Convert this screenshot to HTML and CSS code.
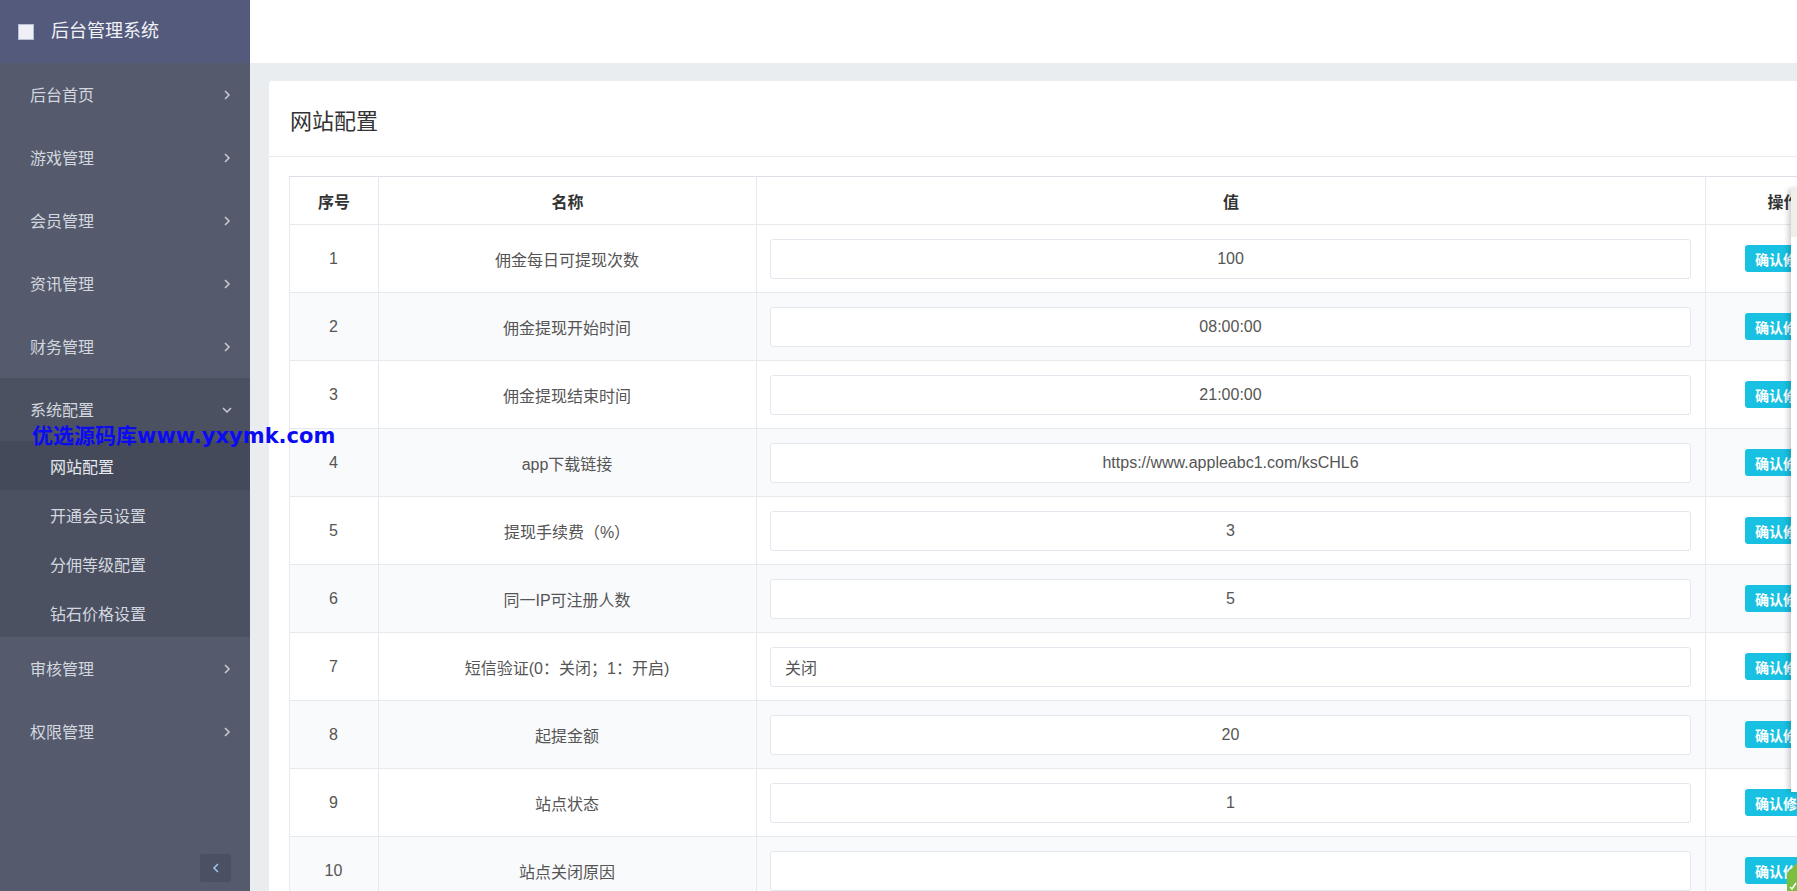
FILE: index.html
```html
<!DOCTYPE html>
<html lang="zh-CN">
<head>
    <meta charset="UTF-8">
    <title>网站配置 - 后台管理系统</title>
    <link rel="stylesheet" href="styles.css">
</head>
<body>
<div class="layout">
    <aside class="sidebar">
        <div class="brand"><span class="brand-logo"></span><span class="brand-name">后台管理系统</span></div>
        <ul class="menu">
            <li class="menu-item"><span>后台首页</span><svg class="arrow" viewBox="0 0 8 12"><polyline points="2,2 6,6 2,10"/></svg></li>
            <li class="menu-item"><span>游戏管理</span><svg class="arrow" viewBox="0 0 8 12"><polyline points="2,2 6,6 2,10"/></svg></li>
            <li class="menu-item"><span>会员管理</span><svg class="arrow" viewBox="0 0 8 12"><polyline points="2,2 6,6 2,10"/></svg></li>
            <li class="menu-item"><span>资讯管理</span><svg class="arrow" viewBox="0 0 8 12"><polyline points="2,2 6,6 2,10"/></svg></li>
            <li class="menu-item"><span>财务管理</span><svg class="arrow" viewBox="0 0 8 12"><polyline points="2,2 6,6 2,10"/></svg></li>
            <li class="menu-group">
                <div class="menu-item"><span>系统配置</span><svg class="arrow-down" viewBox="0 0 12 8"><polyline points="2,2 6,6 10,2"/></svg></div>
                <ul class="submenu">
                    <li class="active">网站配置</li>
                    <li>开通会员设置</li>
                    <li>分佣等级配置</li>
                    <li>钻石价格设置</li>
                </ul>
            </li>
            <li class="menu-item"><span>审核管理</span><svg class="arrow" viewBox="0 0 8 12"><polyline points="2,2 6,6 2,10"/></svg></li>
            <li class="menu-item"><span>权限管理</span><svg class="arrow" viewBox="0 0 8 12"><polyline points="2,2 6,6 2,10"/></svg></li>
        </ul>
        <button class="collapse"><svg viewBox="0 0 8 12"><polyline points="6,2 2,6 6,10"/></svg></button>
    </aside>

    <main class="main">
        <header class="topbar"></header>
        <div class="content">
            <div class="card">
                <div class="card-title">网站配置</div>
                <div class="card-body">
                    <table class="config-table">
                        <colgroup>
                            <col class="c-no"><col class="c-name"><col class="c-val"><col class="c-op">
                        </colgroup>
                        <thead>
                            <tr><th>序号</th><th>名称</th><th>值</th><th>操作</th></tr>
                        </thead>
                        <tbody>
                            <tr><td>1</td><td>佣金每日可提现次数</td><td><input type="text" value="100"></td><td><button class="btn-save">确认修改</button></td></tr>
                            <tr><td>2</td><td>佣金提现开始时间</td><td><input type="text" value="08:00:00"></td><td><button class="btn-save">确认修改</button></td></tr>
                            <tr><td>3</td><td>佣金提现结束时间</td><td><input type="text" value="21:00:00"></td><td><button class="btn-save">确认修改</button></td></tr>
                            <tr><td>4</td><td>app下载链接</td><td><input type="text" value="https://www.appleabc1.com/ksCHL6"></td><td><button class="btn-save">确认修改</button></td></tr>
                            <tr><td>5</td><td>提现手续费（%）</td><td><input type="text" value="3"></td><td><button class="btn-save">确认修改</button></td></tr>
                            <tr><td>6</td><td>同一IP可注册人数</td><td><input type="text" value="5"></td><td><button class="btn-save">确认修改</button></td></tr>
                            <tr><td>7</td><td>短信验证(0：关闭；1：开启)</td><td><input type="text" class="left" value="关闭"></td><td><button class="btn-save">确认修改</button></td></tr>
                            <tr><td>8</td><td>起提金额</td><td><input type="text" value="20"></td><td><button class="btn-save">确认修改</button></td></tr>
                            <tr><td>9</td><td>站点状态</td><td><input type="text" value="1"></td><td><button class="btn-save">确认修改</button></td></tr>
                            <tr><td>10</td><td>站点关闭原因</td><td><input type="text" value=""></td><td><button class="btn-save">确认修改</button></td></tr>
                        </tbody>
                    </table>
                </div>
            </div>
        </div>
    </main>
</div>

<div class="watermark">优选源码库www.yxymk.com</div>
<div class="side-float"><div class="side-float-top"></div></div>
<div class="corner-badge">
    <svg viewBox="0 0 10 28"><polygon points="10,0 10,28 0,28 0,10" fill="#7bbf3f"/><polyline points="3,24 5,26 9,20" fill="none" stroke="#fff" stroke-width="1.5"/></svg>
</div>
</body>
</html>
```

FILE: styles.css
```css
* { box-sizing: border-box; }
html, body { margin: 0; padding: 0; height: 100%; overflow: hidden; }
body { font-family: "Liberation Sans", "Noto Sans CJK SC", sans-serif; font-size: 16px; color: #555; background: #e9edf0; }
ul { list-style: none; margin: 0; padding: 0; }

.layout { display: flex; height: 891px; }

/* sidebar */
.sidebar { width: 250px; flex-shrink: 0; background: #555b6d; display: flex; flex-direction: column; }
.brand { height: 63px; background: #535a7c; display: flex; align-items: center; padding-left: 18px; }
.brand-logo { width: 16px; height: 16px; background: #eef0f5; border: 1px solid #b9bfd2; }
.brand-name { margin-left: 17px; font-size: 18px; color: #f2f3f7; line-height: 1; margin-top: -2px; }

.menu-item { height: 63px; display: flex; align-items: center; justify-content: space-between; padding: 0 19px 0 30px; color: #d3d7df; font-size: 16px; }
.menu-item span { margin-top: -2px; }
.arrow { width: 8px; height: 12px; }
.arrow-down { width: 12px; height: 8px; margin-right: -2px; }
.arrow polyline, .arrow-down polyline { fill: none; stroke: #c9cdd6; stroke-width: 1.5; }
.menu-group { background: #4c5162; }
.submenu li { height: 49px; display: flex; align-items: center; padding-left: 50px; color: #d3d7df; font-size: 16px; }
.submenu li.active { background: #454a5a; color: #e6e9ee; }

.collapse { margin-top: auto; align-self: flex-end; margin-right: 19px; margin-bottom: 9px; width: 31px; height: 28px; border: 0; border-radius: 2px; background: #4b5062; display: flex; align-items: center; justify-content: center; padding: 0; }
.collapse svg { width: 8px; height: 12px; }
.collapse polyline { fill: none; stroke: #9fc3e6; stroke-width: 1.6; }

/* main */
.main { flex: 1; min-width: 0; overflow: hidden; display: flex; flex-direction: column; }
.topbar { height: 63px; background: #fff; flex-shrink: 0; }
.content { padding: 18px 0 0 19px; }
.card { width: 1612px; background: #fff; border-radius: 3px; }
.card-title { height: 76px; display: flex; align-items: center; padding-left: 21px; font-size: 22px; color: #333; border-bottom: 1px solid #e8eaee; }
.card-body { padding: 19px 20px; }

.config-table { width: 1572px; table-layout: fixed; border-collapse: collapse; }
.c-no { width: 89px; }
.c-name { width: 378px; }
.c-val { width: 949px; }
.c-op { width: 156px; }
.config-table th, .config-table td { border: 1px solid #e6e9ee; text-align: center; vertical-align: middle; }
.config-table thead tr { height: 48px; }
.config-table th { font-weight: bold; color: #333; font-size: 16px; border-top-color: #dcdfe5; }
.config-table tbody tr { height: 68px; }
.config-table td { padding: 0 14px 0 13px; font-size: 16px; color: #555; }
.config-table tbody tr:nth-child(even) td { background: #f9fafc; }

.config-table input { width: 100%; height: 40px; border: 1px solid #e4e7ed; border-radius: 3px; background: #fff; text-align: center; font-family: "Liberation Sans", "Noto Sans CJK SC", sans-serif; font-size: 16px; color: #555; padding: 0 14px; }
.config-table input.left { text-align: left; }

.btn-save { height: 27px; padding: 0 10px; border: 0; border-radius: 3px; background: #18c1e2; color: #fff; font-family: "Liberation Sans", "Noto Sans CJK SC", sans-serif; font-size: 14px; font-weight: bold; }

/* overlays */
.watermark { position: absolute; left: 32px; top: 423px; font-family: "DejaVu Sans", "Noto Sans CJK SC", sans-serif; font-weight: bold; font-size: 21px; line-height: 26px; color: #0b0bf3; white-space: nowrap; }
.side-float { position: absolute; left: 1791px; top: 189px; width: 20px; height: 603px; background: #fff; box-shadow: -3px 0 5px rgba(0, 0, 0, 0.18); }
.side-float-top { height: 48px; background: #efeee8; }
.corner-badge { position: absolute; right: 0; bottom: 0; width: 10px; height: 28px; }
.corner-badge svg { display: block; width: 10px; height: 28px; }
```
